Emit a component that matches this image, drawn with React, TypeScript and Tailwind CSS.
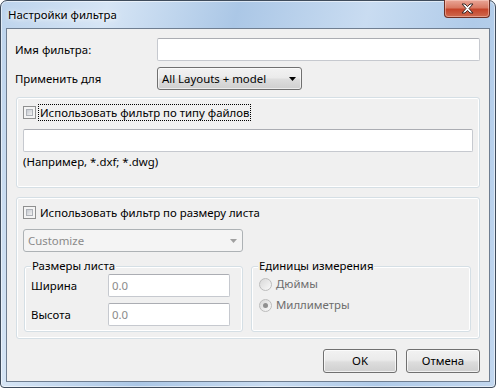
import React from "react";

const font = "font-['Noto_Sans',sans-serif] text-[11.4px] leading-[16px]";

function CheckBox() {
  return (
    <span className="flex h-[13px] w-[13px] shrink-0 border border-[#8e8f8f] bg-[#f4f4f4] p-[2px]">
      <span className="flex-1 border border-[#aeb2b8] bg-linear-to-br from-[#c6cad1] to-[#f2f2f2]" />
    </span>
  );
}

function Radio({ checked }: { checked?: boolean }) {
  return (
    <span className="flex h-[13px] w-[13px] shrink-0 items-center justify-center rounded-full border border-[#bcbcbc] bg-linear-to-br from-[#d8d8d8] to-[#fafafa]">
      {checked && <span className="h-[5px] w-[5px] rounded-full bg-[#8f8f8f]" />}
    </span>
  );
}

function TextBox({ value, className }: { value?: string; className?: string }) {
  return (
    <div
      className={`flex h-[23px] items-center rounded-[2px] border border-[#c6c9cf] border-t-[#abadb3] bg-white px-[3px] text-[#8a8a8a] ${className ?? ""}`}
    >
      {value}
    </div>
  );
}

function Arrow({ color }: { color: string }) {
  return (
    <svg width="7" height="4" viewBox="0 0 7 4">
      <path d="M0 0h7L3.5 4z" fill={color} />
    </svg>
  );
}

function GroupBox({
  title,
  className,
  children,
}: {
  title: string;
  className?: string;
  children: React.ReactNode;
}) {
  return (
    <div
      className={`relative rounded-[3px] border border-[#d5dfe5] shadow-[inset_0_0_0_1px_#ffffff] ${className ?? ""}`}
    >
      <span className="absolute -top-[9px] left-[6px] bg-[#f0f0f0] px-px text-black">
        {title}
      </span>
      {children}
    </div>
  );
}

const buttonCls =
  "flex h-[24px] w-[74px] items-center justify-center rounded-[3px] border border-[#707070] bg-[linear-gradient(#f2f2f2_0%,#ebebeb_45%,#dddddd_55%,#cfcfcf_100%)] shadow-[inset_0_0_0_1px_rgba(255,255,255,0.7)]";

export default function App() {
  return (
    <div className={`h-[389px] w-[496px] bg-white ${font}`}>
      <div className="flex h-[388px] w-[496px] flex-col rounded-t-[7px] rounded-b-[4px] border border-[#3f4c5c] bg-[linear-gradient(105deg,#bcd3ec_0%,#d6e5f5_18%,#abc7e6_40%,#c9dcf1_62%,#b0cbe9_80%,#c2d7ef_100%)] px-[5px] pb-[5px] shadow-[inset_0_0_0_1px_rgba(255,255,255,0.55)]">
        {/* title bar */}
        <div className="flex h-[27px] items-start">
          <span className="ml-[2px] mt-[6px] text-black [text-shadow:0_0_8px_#ffffff,0_0_4px_#ffffff]">
            Настройки фильтра
          </span>
          <div className="ml-auto -mt-px flex h-[18px] w-[46px] items-center justify-center rounded-b-[4px] border border-t-0 border-[#6e2f24] bg-[linear-gradient(#e9a697_0%,#d97a64_45%,#c5442a_55%,#cf6a4e_100%)] shadow-[inset_0_0_0_1px_rgba(255,220,210,0.45)]">
            <svg width="13" height="11" viewBox="0 0 13 11">
              <path
                d="M1 1h3l2.5 2.6L9 1h3L8 5.5l4 4.5H9L6.5 7.4 4 10H1l4-4.5z"
                fill="#ffffff"
                stroke="#3a2a28"
                strokeWidth="1"
                strokeLinejoin="round"
              />
            </svg>
          </div>
        </div>

        {/* client area */}
        <div className="flex flex-1 flex-col border border-[#6f7e91] bg-[#f0f0f0] px-[8px] text-black">
          <div className="mt-[9px] flex h-[23px] items-center">
            <span className="w-[142px] pt-px">Имя фильтра:</span>
            <TextBox className="mr-px flex-1" />
          </div>

          <div className="mt-[6px] flex h-[23px] items-center">
            <span className="w-[142px]">Применить для</span>
            <div className="flex h-[23px] w-[145px] items-center justify-between rounded-[3px] border border-[#707070] bg-[linear-gradient(#f2f2f2_0%,#ebebeb_45%,#dddddd_55%,#cfcfcf_100%)] pl-[4px] pr-[5px] shadow-[inset_0_0_0_1px_rgba(255,255,255,0.6)]">
              <span>All Layouts + model</span>
              <Arrow color="#000000" />
            </div>
          </div>

          {/* file type filter */}
          <div className="mx-px mt-[7px] flex h-[91px] flex-col rounded-[3px] border border-[#d5dfe5] pl-[6px] pr-[6px] shadow-[inset_0_0_0_1px_#ffffff]">
            <div className="mt-[6px] flex h-[17px] items-center">
              <CheckBox />
              <span className="ml-[2px] border border-dotted border-black px-[1px] leading-[15px]">
                Использовать фильтр по типу файлов
              </span>
            </div>
            <TextBox className="mt-[8px]" />
            <span className="mt-[2px]">(Например, *.dxf; *.dwg)</span>
          </div>

          {/* sheet size filter */}
          <div className="mx-px mt-[9px] flex h-[142px] flex-col rounded-[3px] border border-[#d5dfe5] pl-[6px] pr-[6px] shadow-[inset_0_0_0_1px_#ffffff]">
            <div className="mt-[6px] flex h-[17px] items-center">
              <CheckBox />
              <span className="ml-[4px]">Использовать фильтр по размеру листа</span>
            </div>
            <div className="mt-[8px] flex h-[23px] w-[220px] items-center justify-between rounded-[3px] border border-[#adb2b5] bg-[#f4f4f4] pl-[4px] pr-[5px] text-[#8a8a8a]">
              <span>Customize</span>
              <Arrow color="#a0a0a0" />
            </div>

            <div className="mt-[14px] flex gap-[8px] pl-px">
              <GroupBox title="Размеры листа" className="h-[66px] w-[219px]">
                <div className="flex flex-col gap-[6px] pl-[6px] pr-[12px] pt-[7px]">
                  <div className="flex items-center">
                    <span className="w-[77px]">Ширина</span>
                    <TextBox value="0.0" className="flex-1" />
                  </div>
                  <div className="flex items-center">
                    <span className="w-[77px]">Высота</span>
                    <TextBox value="0.0" className="flex-1" />
                  </div>
                </div>
              </GroupBox>
              <GroupBox title="Единицы измерения" className="h-[66px] w-[220px]">
                <div className="flex flex-col gap-[5px] pl-[7px] pt-[9px] text-[#6d6d6d]">
                  <div className="flex h-[16px] items-center gap-[4px]">
                    <Radio />
                    <span>Дюймы</span>
                  </div>
                  <div className="flex h-[16px] items-center gap-[4px]">
                    <Radio checked />
                    <span>Миллиметры</span>
                  </div>
                </div>
              </GroupBox>
            </div>
          </div>

          {/* buttons */}
          <div className="mr-px mt-[10px] flex justify-end gap-[9px]">
            <button className={buttonCls}>OK</button>
            <button className={buttonCls}>Отмена</button>
          </div>
        </div>
      </div>
    </div>
  );
}
